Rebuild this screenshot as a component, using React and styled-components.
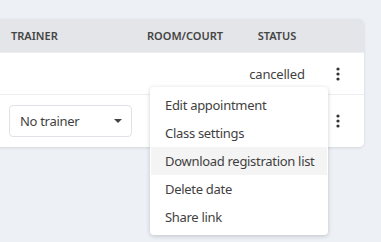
import React from "react";
import styled, { createGlobalStyle } from "styled-components";

const Global = createGlobalStyle`
  html, body { margin: 0; padding: 0; }
  body {
    background: #edf0f4;
    font-family: "Noto Sans", "Open Sans", sans-serif;
    color: #3c3c3c;
    width: 381px;
    height: 242px;
    overflow: hidden;
  }
`;

const Page = styled.div`
  position: relative;
  padding-top: 19px;
  height: 242px;
  box-sizing: border-box;
`;

const Card = styled.div`
  width: 384px;
  margin-left: -20px;
  background: #ffffff;
  border-radius: 5px;
  box-shadow: 0 1px 3px rgba(30, 40, 60, 0.12);
  overflow: hidden;
`;

const Row = styled.div`
  display: grid;
  grid-template-columns: 156px 110px 62px 56px;
  align-items: center;
  height: ${(p) => p.h}px;
  background: ${(p) => (p.head ? "#e3e5e8" : "#ffffff")};
  border-bottom: ${(p) => (p.last ? "none" : "1px solid #eceef1")};
  box-sizing: border-box;
`;

const HeadCell = styled.div`
  font-size: 11px;
  font-weight: 600;
  color: #444;
  padding-left: ${(p) => p.pl || 0}px;
  text-align: ${(p) => p.align || "left"};
  white-space: nowrap;
`;

const Cell = styled.div`
  font-size: 13px;
  letter-spacing: -0.2px;
  color: #3f3f3f;
  padding-left: ${(p) => p.pl || 0}px;
  text-align: ${(p) => p.align || "left"};
  white-space: nowrap;
`;

const KebabWrap = styled.div`
  display: flex;
  padding-left: 28px;
`;

const Select = styled.div`
  margin-left: 29px;
  width: 123px;
  height: 32px;
  box-sizing: border-box;
  border: 1px solid #dfe2e6;
  border-radius: 4px;
  display: flex;
  align-items: center;
  justify-content: space-between;
  padding: 0 9px 0 10px;
  font-size: 13px;
  letter-spacing: -0.3px;
  color: #3f3f3f;
`;

const Caret = styled.span`
  width: 0;
  height: 0;
  border-left: 4px solid transparent;
  border-right: 4px solid transparent;
  border-top: 4px solid #444;
`;

const Menu = styled.div`
  position: absolute;
  left: 150px;
  top: 87px;
  width: 178px;
  background: #fff;
  border-radius: 4px;
  box-shadow: 0 1px 4px rgba(30, 40, 60, 0.22);
  padding: 4px 1px 4px 1px;
  box-sizing: border-box;
`;

const Item = styled.div`
  height: 28px;
  display: flex;
  align-items: center;
  padding-left: 14px;
  font-size: 13px;
  letter-spacing: -0.3px;
  color: #3f3f3f;
  background: ${(p) => (p.active ? "#f4f4f5" : "transparent")};
  white-space: nowrap;
`;

const Kebab = () => (
  <svg width="4" height="14" viewBox="0 0 4 14">
    <circle cx="2" cy="2" r="1.6" fill="#333" />
    <circle cx="2" cy="7" r="1.6" fill="#333" />
    <circle cx="2" cy="12" r="1.6" fill="#333" />
  </svg>
);

export default function App() {
  return (
    <>
      <Global />
      <Page>
        <Card>
          <Row head h={34}>
            <HeadCell pl={31}>TRAINER</HeadCell>
            <HeadCell pl={11}>ROOM/COURT</HeadCell>
            <HeadCell align="center">STATUS</HeadCell>
          </Row>
          <Row h={42}>
            <Cell />
            <Cell />
            <Cell align="center">cancelled</Cell>
            <KebabWrap>
              <Kebab />
            </KebabWrap>
          </Row>
          <Row h={52} last>
            <div>
              <Select>
                No trainer
                <Caret />
              </Select>
            </div>
            <Cell />
            <Cell />
            <KebabWrap>
              <Kebab />
            </KebabWrap>
          </Row>
        </Card>
        <Menu>
          <Item>Edit appointment</Item>
          <Item>Class settings</Item>
          <Item active>Download registration list</Item>
          <Item>Delete date</Item>
          <Item>Share link</Item>
        </Menu>
      </Page>
    </>
  );
}
